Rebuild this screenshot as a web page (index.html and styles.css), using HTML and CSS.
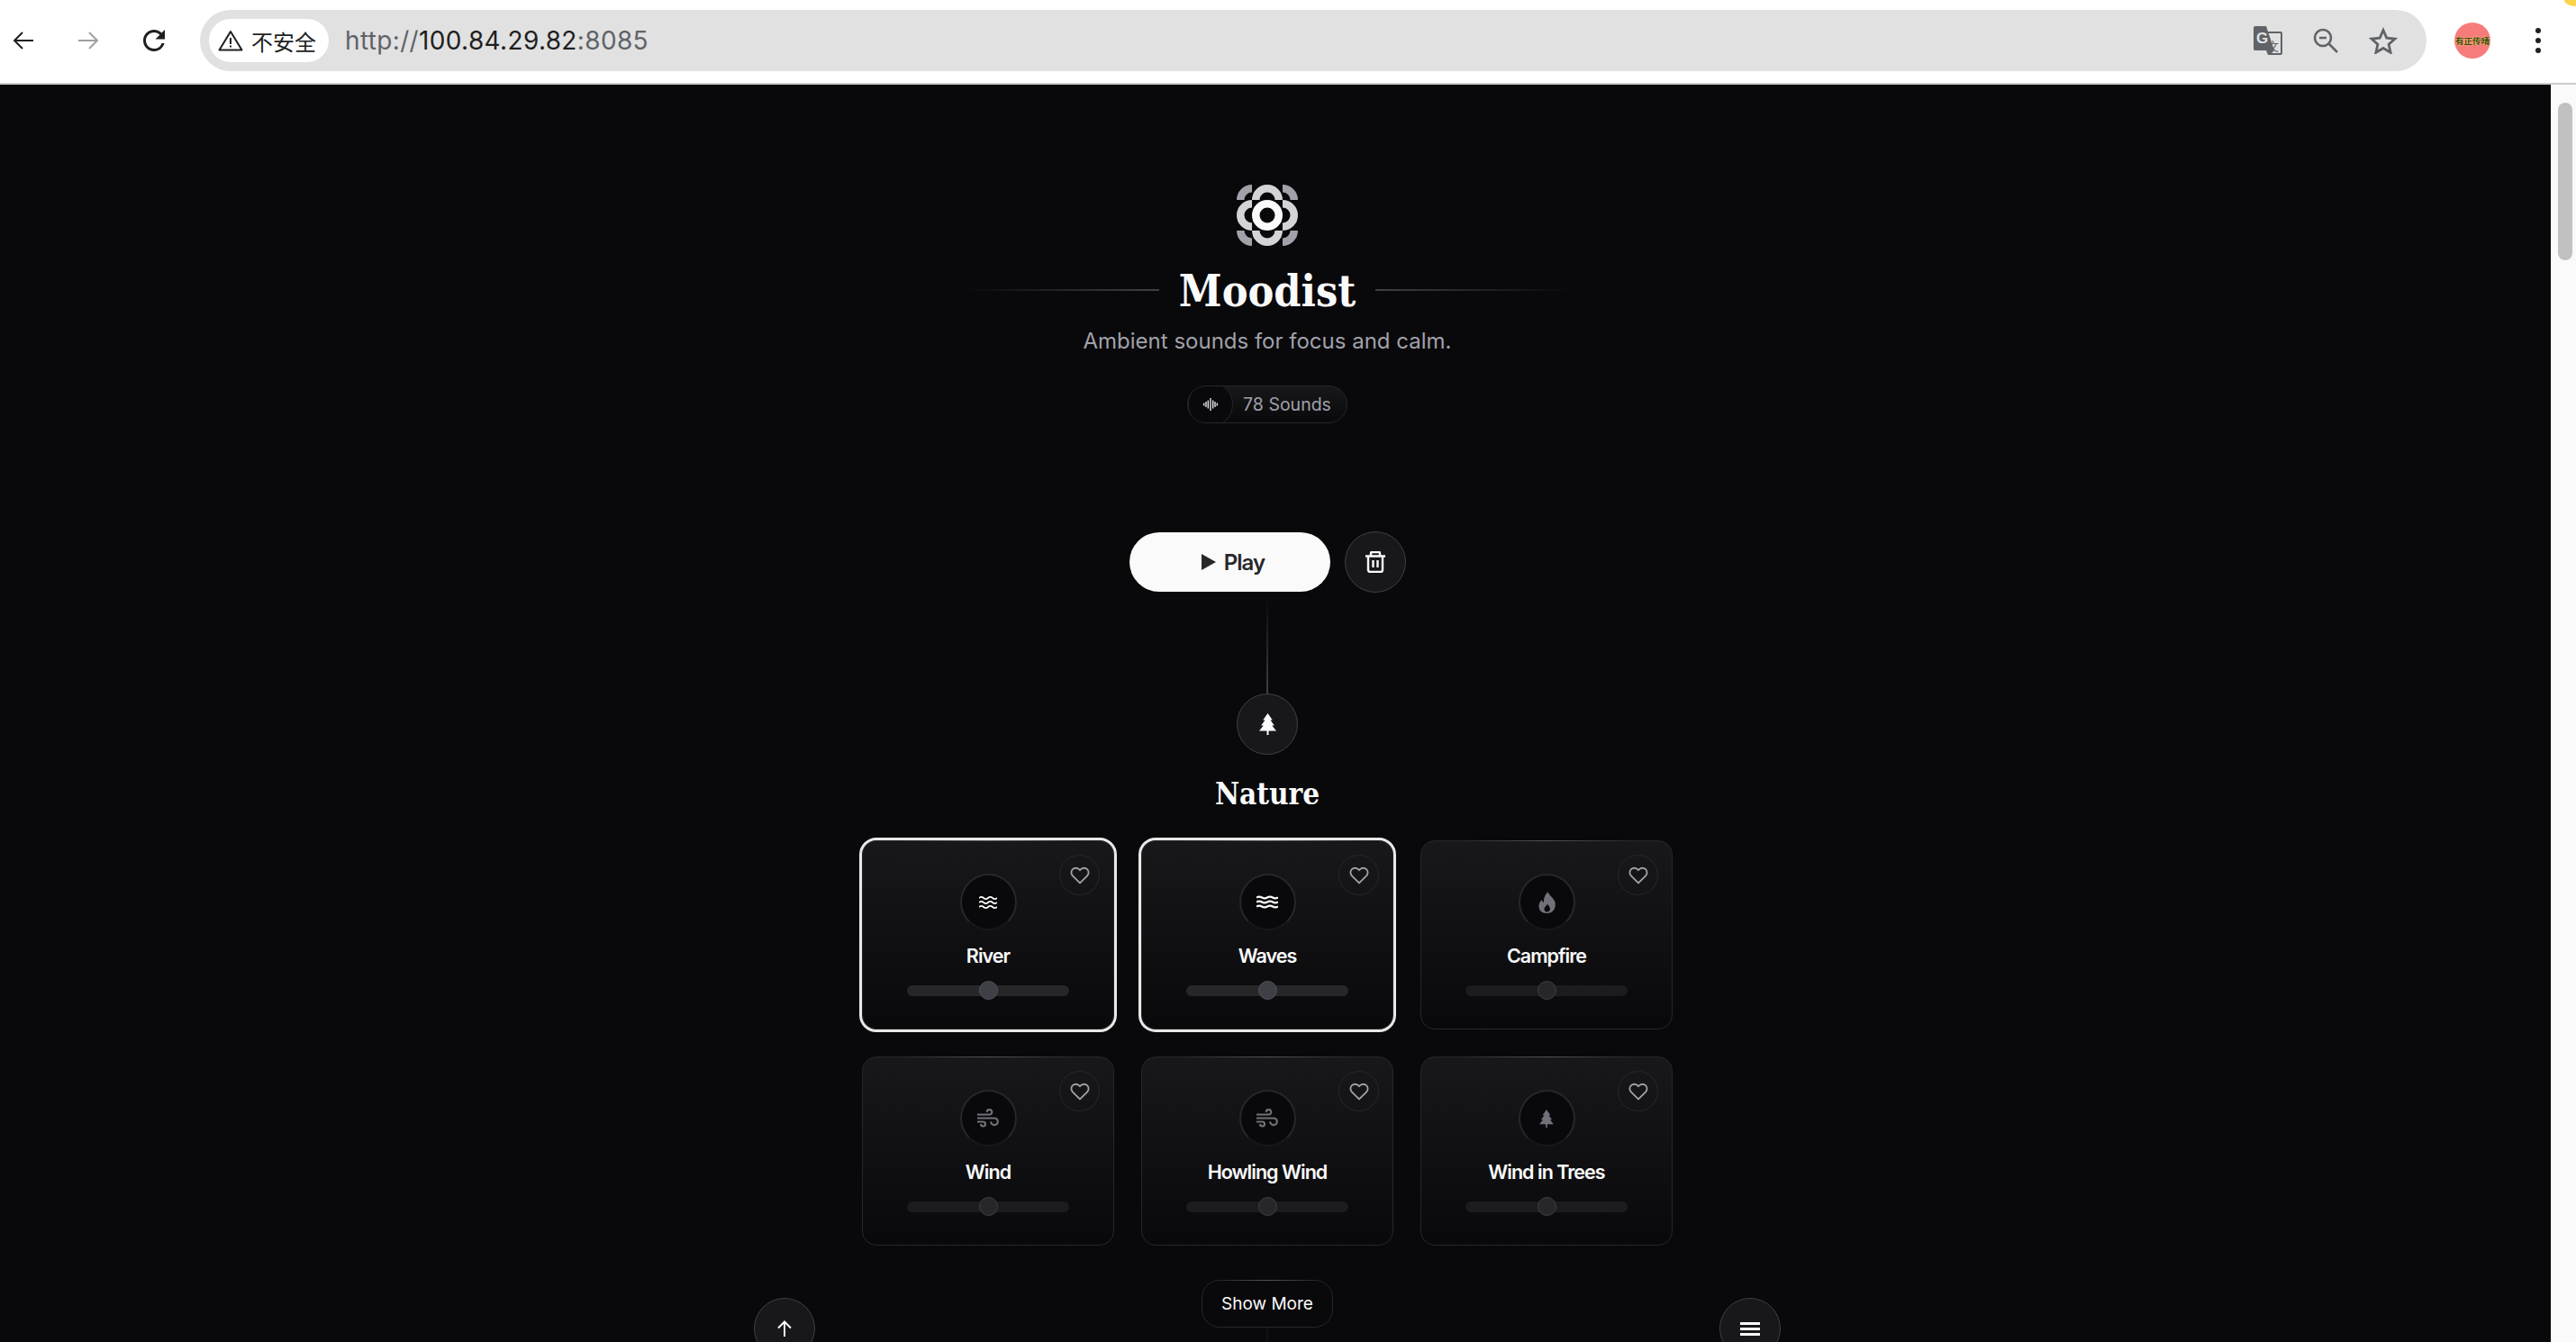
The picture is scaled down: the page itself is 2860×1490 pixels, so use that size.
FILE: index.html
```html
<!DOCTYPE html>
<html lang="en">
<head>
    <meta charset="UTF-8">
    <title>Moodist</title>
    <link rel="stylesheet" href="styles.css">
</head>
<body>
    <svg class="sprite" aria-hidden="true">
        <symbol id="i-heart" viewBox="0 0 24 24"><path fill="none" stroke="currentColor" stroke-width="2" stroke-linejoin="round" d="M20.84 4.61a5.5 5.5 0 0 0-7.78 0L12 5.67l-1.06-1.06a5.5 5.5 0 0 0-7.78 7.78l1.06 1.06L12 21.23l7.78-7.78 1.06-1.06a5.5 5.5 0 0 0 0-7.78z"/></symbol>
        <symbol id="i-tree" viewBox="0 0 19 24"><path fill="currentColor" d="M9.500 0 4.200 7.500h2.300L2.200 13.500h2.600L0 19.500h8.500V24h2v-4.500H19l-4.800-6h2.600l-4.300-6h2.300z"/></symbol>
        <symbol id="i-river" viewBox="0 0 20 14"><path fill="none" stroke="currentColor" stroke-width="1.700" d="M0 2q2.500-2.200 5 0t5 0 5 0 5 0M0 7q2.500-2.200 5 0t5 0 5 0 5 0M0 12q2.500-2.200 5 0t5 0 5 0 5 0"/></symbol>
        <symbol id="i-waves" viewBox="0 0 24 15"><path fill="none" stroke="currentColor" stroke-width="2.400" d="M0 2.500q3-1.800 6 0t6 0 6 0 6 0M0 7.500q3-1.800 6 0t6 0 6 0 6 0M0 12.500q3-1.800 6 0t6 0 6 0 6 0"/></symbol>
        <symbol id="i-fire" viewBox="0 0 19 24"><path fill="currentColor" fill-rule="evenodd" d="M10.500 0c1 4 6 6.500 7.800 11 1.800 5-1 13-8.800 13C3 24 0 20 .6 15c.3-2.700 1.800-4.500 3.200-6 .3 1.500.8 2.500 2 3.200C5.500 7.500 7.500 3.500 10.500 0zM10 13.500c-.4 2-3.500 3.200-3.500 6 0 1.900 1.400 3 3.100 3 1.800 0 3.400-1.200 3.400-3.200 0-2.400-2-3.500-3-5.800z"/></symbol>
        <symbol id="i-wind" viewBox="0 0 24 21"><path fill="none" stroke="currentColor" stroke-width="2.200" d="M0 6.500h13.500a2.800 2.800 0 1 0-2.800-2.800M0 10.500h19a3.800 3.800 0 1 1-3.800 3.800M0 14.500h6.500a2.500 2.500 0 1 1-2.500 2.500"/></symbol>
    </svg>

    <header class="toolbar">
        <span class="corner"></span>
        <svg class="tool-icon" viewBox="0 0 24 24"><path fill="none" stroke="currentColor" stroke-width="2" d="M23 12H2M11 3l-9 9 9 9"/></svg>
        <svg class="tool-icon tool-off" viewBox="0 0 24 24"><path fill="none" stroke="currentColor" stroke-width="2" d="M1 12h21M13 3l9 9-9 9"/></svg>
        <svg class="tool-icon tool-reload" viewBox="0 0 24 24"><path fill="currentColor" d="M17.650 6.350A7.958 7.958 0 0 0 12 4c-4.420 0-7.990 3.580-7.990 8s3.570 8 7.990 8c3.730 0 6.840-2.550 7.730-6h-2.080A5.990 5.990 0 0 1 12 18c-3.310 0-6-2.690-6-6s2.690-6 6-6c1.660 0 3.140.69 4.220 1.780L13 11h7V4l-2.350 2.350z"/></svg>

        <div class="omnibox">
            <div class="security">
                <svg class="warn" viewBox="0 0 28 24"><path fill="none" stroke="currentColor" stroke-width="2" stroke-linejoin="round" d="M14 2 26.500 22.500h-25z"/><path fill="currentColor" d="M13 9h2v7h-2zM13 17.500h2v2h-2z"/></svg>
                <span>不安全</span>
            </div>
            <div class="url"><span class="url-dim">http://</span>100.84.29.82<span class="url-dim">:8085</span></div>
            <div class="omni-actions">
                <svg class="translate" viewBox="0 0 32 32">
                    <path fill="none" stroke="#5f6368" stroke-width="2" d="M14 7h16a1 1 0 0 1 1 1v22a1 1 0 0 1-1 1H18"/>
                    <path fill="#5f6368" d="M2 0h12l9 27H2a2 2 0 0 1-2-2V2a2 2 0 0 1 2-2zM14 27h9l-5 5h-2z"/>
                    <text class="translate-g" x="3" y="19">G</text>
                    <text class="translate-zh" x="15" y="27">文</text>
                </svg>
                <svg class="zoom-out" viewBox="0 0 28 28"><circle cx="11" cy="11" r="9" fill="none" stroke="#5f6368" stroke-width="2.600"/><path stroke="#5f6368" stroke-width="2.600" d="M7 11h8M17.500 17.500 27 27"/></svg>
                <svg class="star" viewBox="0 0 32 30"><path fill="none" stroke="#5f6368" stroke-width="2.800" d="M16 3.500l3.800 8.600 9.200.9-6.900 6.200 2 9.100-8.100-4.800-8.100 4.800 2-9.100L3 13l9.200-.9z"/></svg>
            </div>
        </div>

        <div class="avatar">有正传晴</div>
        <div class="dots"><i></i><i></i><i></i></div>
    </header>

    <div class="viewport">
        <main class="page">
            <svg class="logo" viewBox="0 0 68 68" fill="none" stroke-width="8.500">
                <g stroke="#a1a1aa">
                    <path d="M4.250 17A12.750 12.750 0 0 1 17 4.250"/>
                    <path d="M51 4.250A12.750 12.750 0 0 1 63.750 17"/>
                    <path d="M4.250 51A12.750 12.750 0 0 0 17 63.750"/>
                    <path d="M51 63.750A12.750 12.750 0 0 0 63.750 51"/>
                </g>
                <g stroke="#d4d4d8">
                    <path d="M21.250 17a12.750 12.750 0 0 1 25.500 0"/>
                    <path d="M21.250 51a12.750 12.750 0 0 0 25.500 0"/>
                    <path d="M17 21.250a12.750 12.750 0 0 0 0 25.500"/>
                    <path d="M51 21.250a12.750 12.750 0 0 1 0 25.500"/>
                </g>
                <circle cx="34" cy="34" r="12.750" stroke="#fafafa"/>
            </svg>

            <div class="title-row">
                <span class="rule rule-left"></span>
                <h1 class="title">Moodist</h1>
                <span class="rule rule-right"></span>
            </div>
            <p class="tagline">Ambient sounds for focus and calm.</p>

            <div class="badge">
                <span class="badge-icon">
                    <svg viewBox="0 0 16 14"><path fill="none" stroke="#e4e4e7" stroke-width="1.400" d="M.7 5.500v3M3 4v6M5.300 2.500v9M8 0v14M10.700 2.500v9M13 4v6M15.300 5.500v3"/></svg>
                </span>
                <span class="badge-text">78 Sounds</span>
            </div>

            <div class="controls">
                <button class="play-btn" type="button"><span class="play-tri"></span>Play</button>
                <button class="round-btn" type="button">
                    <svg class="trash" viewBox="0 0 22 24"><path fill="none" stroke="currentColor" stroke-width="2.400" stroke-linejoin="round" d="M0 5.500h22M6 5.500V2.200A1.200 1.200 0 0 1 7.200 1h7.600A1.200 1.200 0 0 1 16 2.200v3.300M3 5.500v15.300A2.200 2.200 0 0 0 5.200 23h11.600a2.200 2.200 0 0 0 2.200-2.200V5.500M8.500 10v8M13.500 10v8"/></svg>
                </button>
            </div>

            <span class="connector"></span>
            <div class="round-btn">
                <svg class="cat-icon"><use href="#i-tree"/></svg>
            </div>
            <h2 class="cat-title">Nature</h2>

            <div class="sounds">
                <div class="sound sound-on">
                    <button class="fav" type="button"><svg><use href="#i-heart"/></svg></button>
                    <div class="sound-icon"><svg class="ic-river"><use href="#i-river"/></svg></div>
                    <div class="sound-name">River</div>
                    <input class="volume" type="range" value="50">
                </div>
                <div class="sound sound-on">
                    <button class="fav" type="button"><svg><use href="#i-heart"/></svg></button>
                    <div class="sound-icon"><svg class="ic-waves"><use href="#i-waves"/></svg></div>
                    <div class="sound-name">Waves</div>
                    <input class="volume" type="range" value="50">
                </div>
                <div class="sound">
                    <button class="fav" type="button"><svg><use href="#i-heart"/></svg></button>
                    <div class="sound-icon"><svg class="ic-fire"><use href="#i-fire"/></svg></div>
                    <div class="sound-name">Campfire</div>
                    <input class="volume" type="range" value="50">
                </div>
                <div class="sound">
                    <button class="fav" type="button"><svg><use href="#i-heart"/></svg></button>
                    <div class="sound-icon"><svg class="ic-wind"><use href="#i-wind"/></svg></div>
                    <div class="sound-name">Wind</div>
                    <input class="volume" type="range" value="50">
                </div>
                <div class="sound">
                    <button class="fav" type="button"><svg><use href="#i-heart"/></svg></button>
                    <div class="sound-icon"><svg class="ic-wind"><use href="#i-wind"/></svg></div>
                    <div class="sound-name">Howling Wind</div>
                    <input class="volume" type="range" value="50">
                </div>
                <div class="sound">
                    <button class="fav" type="button"><svg><use href="#i-heart"/></svg></button>
                    <div class="sound-icon"><svg class="ic-tree"><use href="#i-tree"/></svg></div>
                    <div class="sound-name">Wind in Trees</div>
                    <input class="volume" type="range" value="50">
                </div>
            </div>

            <button class="show-more" type="button">Show More</button>
            <span class="connector-end"></span>

            <div class="floating">
                <button class="round-btn" type="button">
                    <svg class="up" viewBox="0 0 18 18"><path fill="none" stroke="currentColor" stroke-width="2" d="M9 18V1.500M2 8.500l7-7 7 7"/></svg>
                </button>
                <button class="round-btn" type="button">
                    <svg class="menu" viewBox="0 0 22 15"><path stroke="currentColor" stroke-width="3" d="M0 1.500h22M0 7.500h22M0 13.500h22"/></svg>
                </button>
            </div>
        </main>
        <div class="scrollbar"><div class="thumb"></div></div>
    </div>
</body>
</html>
```

FILE: styles.css
```css
* {
    box-sizing: border-box;
}

html, body {
    height: 100%;
    margin: 0;
    overflow: hidden;
}

body {
    display: flex;
    flex-direction: column;
    font-family: Inter, "Noto Sans CJK SC", sans-serif;
    background: #09090b;
}

button {
    font-family: inherit;
    padding: 0;
    cursor: pointer;
}

.sprite {
    display: none;
}

/* browser chrome */
.toolbar {
    position: relative;
    display: flex;
    align-items: center;
    flex: 0 0 94px;
    padding: 0 0 2px 14px;
    background: #fff;
    border-bottom: 2px solid #ccc;
}

.corner {
    position: absolute;
    top: 0;
    right: 0;
    width: 13px;
    height: 7px;
    background: #fbd34d;
    border-bottom-left-radius: 100%;
}

.tool-icon {
    width: 24px;
    height: 24px;
    margin-right: 48px;
    color: #1f1f1f;
}

.tool-off {
    color: #a0a0a0;
}

.tool-reload {
    width: 36px;
    height: 36px;
    margin: 0 33px 0 -5px;
}

.omnibox {
    display: flex;
    align-items: center;
    width: 2472px;
    height: 68px;
    padding: 0 32px 0 10px;
    border-radius: 34px;
    background: #e1e1e1;
}

.security {
    display: flex;
    align-items: center;
    gap: 9px;
    height: 48px;
    padding: 0 14px 0 10px;
    border-radius: 24px;
    background: #fff;
    color: #1f1f1f;
    font-size: 24px;
}

.warn {
    width: 28px;
    height: 24px;
}

.url {
    flex: 1;
    margin-left: 18px;
    font-family: Inter, sans-serif;
    font-size: 28px;
    letter-spacing: 0.35px;
    color: #1f1f1f;
}

.url-dim {
    color: #5f6368;
}

.omni-actions {
    display: flex;
    align-items: center;
    gap: 34px;
}

.translate {
    width: 32px;
    height: 32px;
}

.translate-g {
    font: 700 17px "Liberation Sans", sans-serif;
    fill: #e1e1e1;
}

.translate-zh {
    font: 400 13px "Noto Sans CJK SC", sans-serif;
    fill: #5f6368;
}

.zoom-out {
    width: 28px;
    height: 28px;
}

.star {
    width: 32px;
    height: 30px;
}

.avatar {
    width: 40px;
    height: 40px;
    margin-left: 31px;
    border-radius: 50%;
    background: #f67c7c;
    color: #3c4a12;
    font: 700 9.500px/40px "Noto Sans CJK SC", sans-serif;
    text-align: center;
    text-shadow: 0 0 2px #f4e85c;
    white-space: nowrap;
}

.dots {
    display: flex;
    flex-direction: column;
    gap: 5px;
    margin-left: 50px;
}

.dots i {
    width: 6px;
    height: 6px;
    border-radius: 50%;
    background: #1f1f1f;
}

.viewport {
    display: flex;
    flex: 1;
    min-height: 0;
}

.scrollbar {
    flex: 0 0 28px;
    padding: 20px 4px 0 8px;
    background: #fafafa;
}

.thumb {
    height: 175px;
    border-radius: 8px;
    background: #c1c1c1;
}

/* page */
.page {
    position: relative;
    display: flex;
    flex-direction: column;
    align-items: center;
    flex: 1;
    overflow: hidden;
    padding: 111px 18px 0 0;
    color: #fafafa;
}

.logo {
    flex: none;
    width: 68px;
    height: 68px;
}

.title-row {
    display: flex;
    align-items: center;
    gap: 22px;
    margin-top: 19px;
}

.title {
    margin: 0;
    padding-top: 2px;
    font: 700 48px/58px "DejaVu Serif", serif;
    font-stretch: condensed;
}

.rule {
    width: 218px;
    height: 2px;
}

.rule-left {
    background: linear-gradient(90deg, transparent, #3f3f46);
}

.rule-right {
    background: linear-gradient(90deg, #3f3f46, transparent);
}

.tagline {
    margin: 11px 0 0;
    font-size: 24px;
    line-height: 32px;
    color: #a1a1aa;
}

.badge {
    position: relative;
    display: flex;
    align-items: center;
    flex: none;
    height: 42px;
    margin-top: 33px;
    overflow: hidden;
    border: 1px solid #27272a;
    border-radius: 21px;
    background: linear-gradient(#18181b, #09090b);
}

.badge-icon {
    display: flex;
    align-items: center;
    justify-content: center;
    width: 50px;
    height: 50px;
    border: 1px solid #27272a;
    border-radius: 50%;
    background: #09090b;
}

.badge-icon svg {
    width: 16px;
    height: 14px;
}

.badge-text {
    padding: 0 17px 0 11px;
    font-size: 19.500px;
    color: #a1a1aa;
}

.controls {
    display: flex;
    align-items: center;
    gap: 16px;
    margin-top: 120px;
}

.play-btn {
    display: flex;
    align-items: center;
    justify-content: center;
    gap: 9px;
    width: 223px;
    height: 66px;
    padding-left: 8px;
    border: 0;
    border-radius: 33px;
    background: #fafafa;
    color: #27272a;
    font-size: 24px;
    font-weight: 600;
    letter-spacing: -0.04em;
}

.play-tri {
    border-left: 16px solid #27272a;
    border-top: 9px solid transparent;
    border-bottom: 9px solid transparent;
}

.round-btn {
    display: flex;
    align-items: center;
    justify-content: center;
    flex: none;
    width: 68px;
    height: 68px;
    border: 1px solid #3f3f46;
    border-radius: 50%;
    background: #18181b;
    color: #fafafa;
}

.trash {
    width: 22px;
    height: 24px;
}

.connector {
    flex: none;
    width: 2px;
    height: 112px;
    background: linear-gradient(transparent 4px, #3f3f46);
}

.cat-icon {
    width: 19px;
    height: 24px;
}

.cat-title {
    margin: 22px 0 29px;
    font: 700 33px/44px "DejaVu Serif", serif;
    font-stretch: condensed;
}

.sounds {
    display: grid;
    grid-template-columns: repeat(3, 280px);
    grid-auto-rows: 210px;
    gap: 30px;
}

.sound {
    position: relative;
    display: flex;
    flex-direction: column;
    align-items: center;
    padding-top: 36px;
    border: 1px solid #27272a;
    border-radius: 16px;
    background: linear-gradient(#18181b, #09090b);
}

/* faint light along the top edge */
.sound::before,
.show-more::before {
    content: "";
    position: absolute;
    top: -1px;
    left: 15%;
    right: 15%;
    height: 1px;
    background: linear-gradient(90deg, transparent, #52525b, transparent);
}

.sound-on {
    outline: 3px solid #e8e8e8;
}

.fav {
    position: absolute;
    top: 15px;
    right: 15px;
    display: flex;
    align-items: center;
    justify-content: center;
    width: 45px;
    height: 45px;
    border: 1px solid #27272a;
    border-radius: 50%;
    background: transparent;
    color: #a1a1aa;
}

.fav svg {
    width: 22px;
    height: 22px;
}

.sound-icon {
    display: flex;
    align-items: center;
    justify-content: center;
    width: 63px;
    height: 63px;
    border: 2px solid #27272a;
    border-bottom-color: #18181b;
    border-radius: 50%;
    background: #09090b;
    color: #71717a;
}

.sound-on .sound-icon {
    color: #fafafa;
}

.ic-river {
    width: 20px;
    height: 14px;
}

.ic-waves {
    width: 24px;
    height: 15px;
}

.ic-fire {
    width: 19px;
    height: 24px;
}

.ic-wind {
    width: 24px;
    height: 21px;
}

.ic-tree {
    width: 16px;
    height: 20px;
}

.sound-name {
    margin-top: 14px;
    font-size: 21.500px;
    font-weight: 600;
    line-height: 28px;
    letter-spacing: -0.045em;
}

.volume {
    appearance: none;
    width: 180px;
    height: 21px;
    margin: 14px 0 0;
    background: transparent;
}

.volume::-webkit-slider-runnable-track {
    height: 12px;
    border-radius: 6px;
    background: #1c1c1f;
}

.volume::-webkit-slider-thumb {
    appearance: none;
    width: 21px;
    height: 21px;
    margin-top: -4.500px;
    border: 1px solid #3f3f46;
    border-radius: 50%;
    background: #27272a;
}

.sound-on .volume::-webkit-slider-runnable-track {
    background: #27272a;
}

.sound-on .volume::-webkit-slider-thumb {
    border-color: #52525b;
    background: #3f3f46;
}

.show-more {
    position: relative;
    flex: none;
    width: 146px;
    height: 53px;
    margin-top: 38px;
    border: 1px solid #27272a;
    border-radius: 20px;
    background: #09090b;
    color: #fafafa;
    font-size: 19px;
    font-weight: 400;
}

.connector-end {
    flex: none;
    width: 2px;
    height: 16px;
    background: #111114;
}

/* buttons that float above the bottom of the page */
.floating {
    position: absolute;
    top: 1347px;
    left: 837px;
    display: flex;
    justify-content: space-between;
    width: 1140px;
}

.up {
    width: 18px;
    height: 18px;
}

.menu {
    width: 22px;
    height: 15px;
}
```
